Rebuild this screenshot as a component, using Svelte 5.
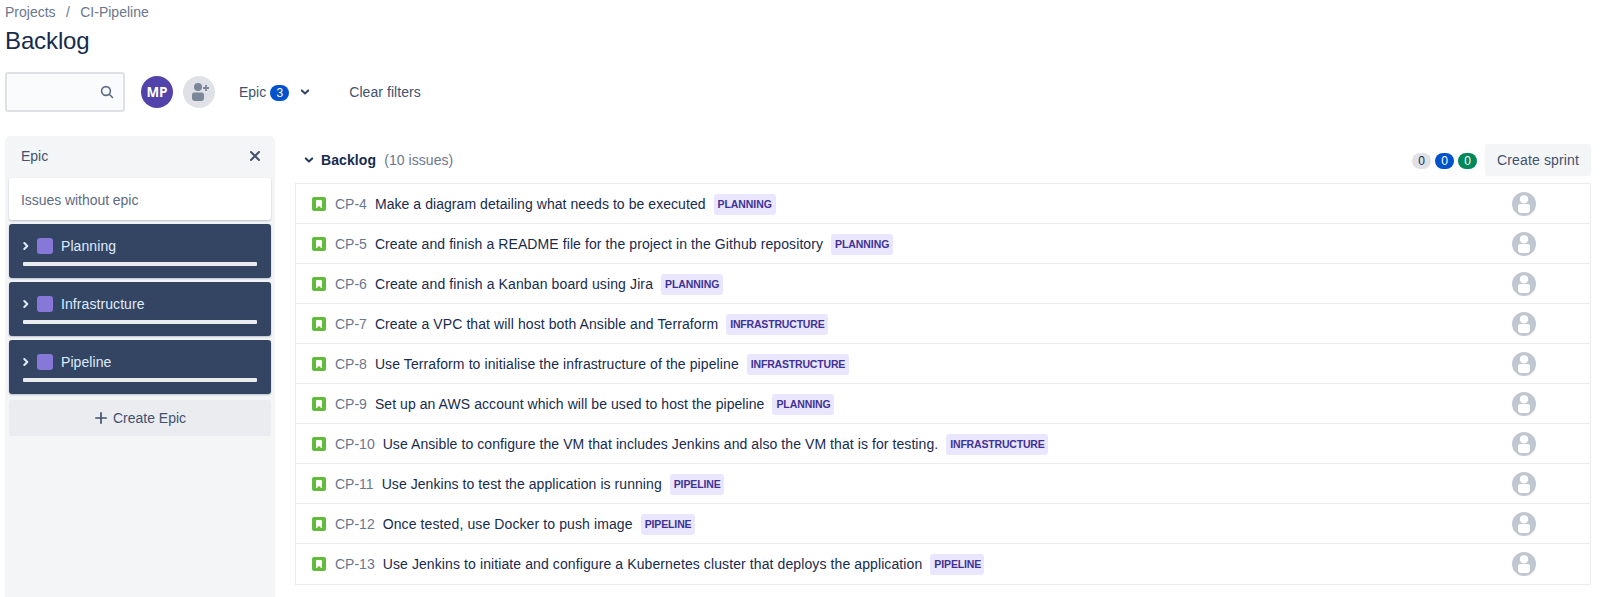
<script>
  const epics = ['Planning', 'Infrastructure', 'Pipeline'];
  // key, title, epic, title tracking in px
  const issues = [
    ['CP-4', 'Make a diagram detailing what needs to be executed', 'planning', 0.061],
    ['CP-5', 'Create and finish a README file for the project in the Github repository', 'planning', 0.097],
    ['CP-6', 'Create and finish a Kanban board using Jira', 'planning', 0.115],
    ['CP-7', 'Create a VPC that will host both Ansible and Terraform', 'infrastructure', 0.093],
    ['CP-8', 'Use Terraform to initialise the infrastructure of the pipeline', 'infrastructure', 0.1],
    ['CP-9', 'Set up an AWS account which will be used to host the pipeline', 'planning', 0.066],
    ['CP-10', 'Use Ansible to configure the VM that includes Jenkins and also the VM that is for testing.', 'infrastructure', 0.077],
    ['CP-11', 'Use Jenkins to test the application is running', 'pipeline', 0.066],
    ['CP-12', 'Once tested, use Docker to push image', 'pipeline', 0.11],
    ['CP-13', 'Use Jenkins to initiate and configure a Kubernetes cluster that deploys the application', 'pipeline', 0.102]
  ];
</script>

<div class="page">
  <nav class="crumbs"><span>Projects</span><span>/</span><span>CI-Pipeline</span></nav>
  <h1>Backlog</h1>

  <div class="toolbar">
    <div class="search">
      <svg width="14" height="14" viewBox="0 0 14 14" fill="none" stroke="#5e6c84" stroke-width="1.6" stroke-linecap="round"><circle cx="6" cy="6" r="4.4" /><path d="M9.3 9.3l3.2 3.2" /></svg>
    </div>
    <div class="avatar">MP</div>
    <div class="avatar add">
      <svg width="32" height="32" viewBox="0 0 32 32" fill="#7a869a"><circle cx="15" cy="11" r="4" /><path d="M9 18.8a2.3 2.3 0 0 1 2.3-2.3h7.4a2.3 2.3 0 0 1 2.3 2.3v3.2a3 3 0 0 1-3 3h-6a3 3 0 0 1-3-3z" /><path d="M23 9v6M20 12h6" stroke="#7a869a" stroke-width="1.8" /></svg>
    </div>
    <div class="filter">
      <span>Epic</span><span class="pill blue">3</span>
      <svg class="down" width="10" height="8" viewBox="0 0 10 8" fill="none" stroke="#344563" stroke-width="2" stroke-linecap="round" stroke-linejoin="round"><path d="M1.8 2.4L5 5.4l3.2-3" /></svg>
    </div>
    <div class="clear">Clear filters</div>
  </div>

  <div class="main">
    <aside>
      <header>
        <span>Epic</span>
        <svg width="12" height="12" viewBox="0 0 12 12" fill="none" stroke="#42526e" stroke-width="2" stroke-linecap="round"><path d="M2 2l8 8M10 2l-8 8" /></svg>
      </header>
      <div class="none">Issues without epic</div>
      {#each epics as epic}
        <div class="epic">
          <div class="name">
            <svg width="6" height="10" viewBox="0 0 6 10" fill="none" stroke="#deebff" stroke-width="2" stroke-linecap="round" stroke-linejoin="round"><path d="M1.3 2L4.3 5l-3 3" /></svg>
            <i></i><span>{epic}</span>
          </div>
          <div class="bar"></div>
        </div>
      {/each}
      <div class="create">
        <svg width="12" height="12" viewBox="0 0 12 12" stroke="#42526e" stroke-width="1.7" stroke-linecap="round"><path d="M6 .9v10.2M.9 6h10.2" /></svg>
        <span>Create Epic</span>
      </div>
    </aside>

    <section>
      <header>
        <svg width="10" height="8" viewBox="0 0 10 8" fill="none" stroke="#253858" stroke-width="2" stroke-linecap="round" stroke-linejoin="round"><path d="M1.8 2.4L5 5.4l3.2-3" /></svg>
        <b>Backlog</b><span class="count">(10 issues)</span>
        <div class="pills"><span class="pill grey">0</span><span class="pill blue">0</span><span class="pill green">0</span></div>
        <div class="sprint">Create sprint</div>
      </header>
      <div class="list">
        {#each issues as [key, title, epic, tracking]}
          <div class="row">
            <svg width="14" height="14" viewBox="0 0 14 14"><rect width="14" height="14" rx="2" fill="#63ba3c" /><path d="M4 4a1 1 0 0 1 1-1h4a1 1 0 0 1 1 1v6.500c0 .6-.5.8-.9.4L7 8.800l-2.100 2.100c-.4.4-.9.2-.9-.4z" fill="#fff" /></svg>
            <span class="key">{key}</span>
            <span class="title" style:letter-spacing="{tracking}px">{title}</span>
            <span class="tag {epic}">{epic}</span>
            <svg class="who" width="24" height="24" viewBox="0 0 24 24"><circle cx="12" cy="12" r="12" fill="#c1c7d0" /><circle cx="12" cy="7.3" r="4.1" fill="#fff" /><path d="M6 14.200A2.200 2.200 0 0 1 8.200 12h7.600A2.200 2.200 0 0 1 18 14.200v3.300a3.500 3.500 0 0 1-3.500 3.500h-5A3.500 3.500 0 0 1 6 17.500z" fill="#fff" /></svg>
          </div>
        {/each}
      </div>
    </section>
  </div>
</div>

<style>
  :global(body) { margin: 0; background: #fff; overflow: hidden; }
  .page { box-sizing: border-box; width: 1601px; height: 597px; overflow: hidden; padding: 0 10px 0 5px; font: 14px/20px "Liberation Sans", Arial, sans-serif; color: #172b4d; }
  .page svg { display: block; flex: none; }
  .crumbs { display: flex; gap: 10.4px; padding-top: 2px; color: #6b778c; }
  h1 { margin: 5px 0 0; font-size: 24px; line-height: 28px; font-weight: 400; letter-spacing: -0.12px; }
  .toolbar { display: flex; align-items: center; height: 40px; margin-top: 17px; color: #42526e; }
  .search { box-sizing: border-box; width: 120px; height: 40px; border: 2px solid #dfe1e6; border-radius: 3px; background: #fafbfc; display: flex; align-items: center; justify-content: flex-end; padding-right: 9px; }
  .avatar { width: 32px; height: 32px; margin-left: 16px; border-radius: 50%; background: #5243aa; color: #fff; font: 700 13.5px/32px "Open Sans", sans-serif; text-align: center; }
  .avatar.add { margin-left: 10px; background: #dfe1e6; }
  .filter { display: flex; align-items: center; margin-left: 24px; }
  .pill { width: 19px; height: 16px; border-radius: 8px; font-size: 12px; line-height: 16px; text-align: center; }
  .filter .pill { margin: 1px 0 0 4px; }
  .down { margin-left: 11px; }
  .clear { margin-left: 39px; letter-spacing: 0.06px; }
  .blue { background: #0052cc; color: #fff; }
  .grey { background: #dfe1e6; color: #172b4d; }
  .green { background: #00875a; color: #fff; }
  .main { display: flex; gap: 20px; margin-top: 24px; }
  aside { box-sizing: border-box; width: 270px; height: 470px; padding: 0 4px; border-radius: 6px 6px 0 0; background: #f4f5f7; color: #42526e; }
  aside header { display: flex; justify-content: space-between; align-items: center; height: 42px; padding: 0 10px 2px 12px; box-sizing: border-box; }
  .none { height: 42px; line-height: 44px; padding-left: 12px; letter-spacing: -0.05px; color: #5e6c84; background: #fff; border-radius: 3px; box-shadow: 0 1px 2px rgba(9, 30, 66, .25); }
  .epic { box-sizing: border-box; height: 54px; margin-top: 4px; padding: 12px 14px 0; border-radius: 3px; background: #344563; color: #deebff; box-shadow: 0 1px 2px rgba(9, 30, 66, .25); }
  .name { display: flex; align-items: center; letter-spacing: 0.08px; }
  .name i { width: 16px; height: 16px; margin: 0 8px; border-radius: 3px; background: #8777d9; }
  .bar { height: 4px; margin-top: 6px; border-radius: 1px; background: #ebecf0; }
  .create { display: flex; align-items: center; justify-content: center; gap: 6px; height: 36px; margin-top: 6px; padding-left: 1px; border-radius: 3px; background: #ebecf0; }
  section { flex: 1; min-width: 0; }
  section header { display: flex; align-items: center; height: 32px; margin-top: 8px; padding-left: 9px; }
  section b { margin-left: 7px; letter-spacing: 0.1px; }
  .count { margin-left: 8px; letter-spacing: 0.06px; color: #6b778c; }
  .pills { display: flex; gap: 4px; margin: 1px 8px 0 auto; }
  .sprint { width: 106px; line-height: 32px; text-align: center; letter-spacing: 0.14px; border-radius: 3px; background: #f4f5f7; color: #42526e; }
  .list { margin-top: 7px; border: 1px solid #ebecf0; }
  .row { box-sizing: border-box; display: flex; align-items: center; height: 40px; padding: 0 54px 0 16px; border-bottom: 1px solid #ebecf0; white-space: nowrap; }
  .row:last-child { border-bottom-color: transparent; }
  .key { margin: 0 8px 0 9px; color: #6b778c; }
  .tag { box-sizing: border-box; height: 21px; margin: 1px 0 0 8px; padding-left: 4px; border-radius: 3px; background: #eae6ff; color: #403294; font-size: 10.5px; font-weight: 700; line-height: 21px; text-transform: uppercase; }
  .tag.planning { width: 62px; letter-spacing: -0.08px; }
  .tag.infrastructure { width: 102px; letter-spacing: -0.18px; }
  .tag.pipeline { width: 54px; letter-spacing: -0.13px; }
  .who { margin-left: auto; }
</style>
